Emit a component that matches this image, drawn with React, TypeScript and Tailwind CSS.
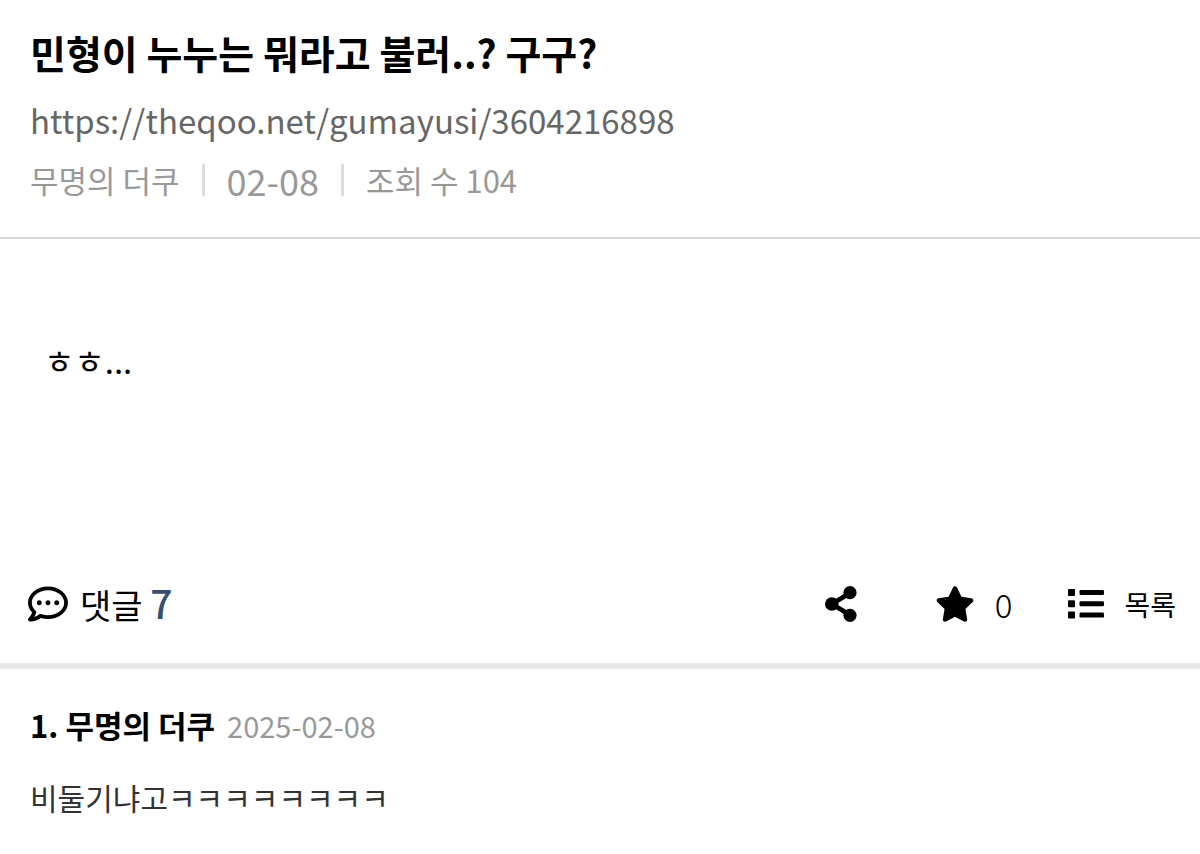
import { FaRegCommentDots } from "react-icons/fa";
import { FaStar } from "react-icons/fa6";

interface Comment {
  id: number;
  author: string;
  date: string;
  text: string;
}

const POST = {
  title: "민형이 누누는 뭐라고 불러..? 구구?",
  url: "https://theqoo.net/gumayusi/3604216898",
  author: "무명의 더쿠",
  date: "02-08",
  views: 104,
  body: "ㅎㅎ...",
  commentCount: 7,
  stars: 0,
};

const COMMENTS: Comment[] = [
  { id: 1, author: "무명의 더쿠", date: "2025-02-08", text: "비둘기냐고ㅋㅋㅋㅋㅋㅋㅋㅋ" },
];

function ShareIcon() {
  return (
    <svg viewBox="0 0 32 36" className="h-9 w-8" aria-hidden="true">
      <path d="M25 7 7 18l18 11" fill="none" stroke="currentColor" strokeWidth="4.8" />
      <circle cx="25" cy="6.7" r="6.6" fill="currentColor" />
      <circle cx="6.8" cy="18" r="6.8" fill="currentColor" />
      <circle cx="25" cy="29.3" r="6.6" fill="currentColor" />
    </svg>
  );
}

function ListIcon() {
  return (
    <svg viewBox="0 0 36 30" className="h-8 w-9" fill="currentColor" aria-hidden="true">
      {[0, 11.3, 22.6].map((y) => (
        <g key={y}>
          <rect x="0" y={y} width="7" height="7" rx="1" />
          <rect x="11.5" y={y + 1} width="24.5" height="5" rx="1.2" />
        </g>
      ))}
    </svg>
  );
}

function Divider() {
  return <span className="h-8 w-[3px] bg-[#dddddd]" />;
}

function PostHeader() {
  return (
    <header className="border-b-2 border-[#d9d9d9] px-[30px] pt-6 pb-[37px]">
      <h1 className="text-[39px] leading-14 font-bold">{POST.title}</h1>
      <a href={POST.url} className="mt-4 block text-[33px] leading-12 text-[#666666]">
        {POST.url}
      </a>
      <div className="mt-4 flex items-center gap-[22px] text-[31px] leading-10 text-[#999999]">
        <span>{POST.author}</span>
        <Divider />
        <span className="text-[36px]">{POST.date}</span>
        <Divider />
        <span>조회 수 {POST.views}</span>
      </div>
    </header>
  );
}

function PostActions() {
  return (
    <div className="flex items-center justify-between border-b-6 border-[#e8e8e8] pr-6 pb-[34px] pl-7">
      <a href="#comments" className="flex items-center gap-3 text-[34px] leading-12">
        <FaRegCommentDots className="size-10" aria-hidden="true" />
        <span>
          댓글 <b className="text-[39px] font-medium text-[#35506f]">{POST.commentCount}</b>
        </span>
      </a>
      <div className="flex items-center text-[28px] leading-12">
        <button type="button" aria-label="공유" className="mr-[78px]">
          <ShareIcon />
        </button>
        <button type="button" aria-label="스크랩" className="mr-14 flex items-center gap-5">
          <FaStar className="size-10" aria-hidden="true" />
          <span className="text-[33px] font-light">{POST.stars}</span>
        </button>
        <a href="#list" className="flex items-center gap-5">
          <ListIcon />
          목록
        </a>
      </div>
    </div>
  );
}

export default function App() {
  return (
    <main className="min-h-screen bg-white font-['Noto_Sans_CJK_KR',sans-serif] text-black">
      <article>
        <PostHeader />
        <div className="px-11 pt-[97px] pb-[194px] text-[33px] leading-12">{POST.body}</div>
        <PostActions />
      </article>
      <section id="comments">
        {COMMENTS.map((comment) => (
          <div key={comment.id} className="px-[30px] pt-8 pb-6">
            <div className="flex items-baseline gap-3">
              <h2 className="text-[31px] leading-12 font-bold">
                {comment.id}. {comment.author}
              </h2>
              <time dateTime={comment.date} className="text-[29px] leading-12 text-[#999999]">
                {comment.date}
              </time>
            </div>
            <p className="mt-6 text-[30px] leading-12 text-[#333333]">{comment.text}</p>
          </div>
        ))}
      </section>
    </main>
  );
}
